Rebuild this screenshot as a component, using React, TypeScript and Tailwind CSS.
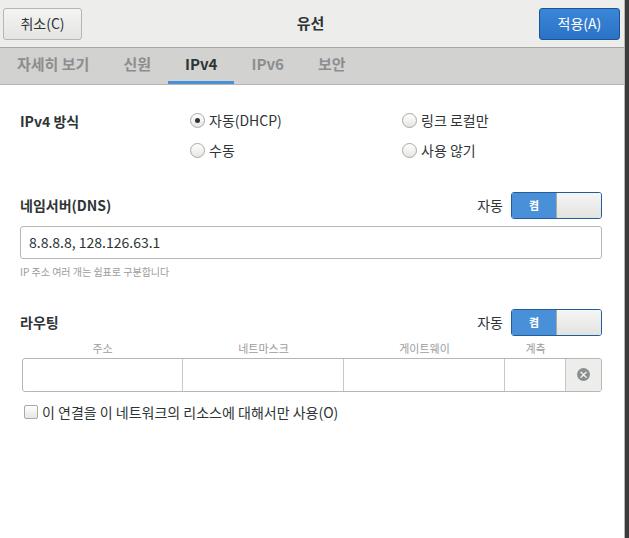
import { useState } from 'react';

const font = { fontFamily: '"Noto Sans CJK KR", "Noto Sans", sans-serif' };

function Radio({ on, label }: { on?: boolean; label: string }) {
  return (
    <label className="flex items-center gap-1 text-[14px] text-[#2e3436]">
      <span className="w-[15px] h-[15px] rounded-full border border-[#a8a8a5] bg-gradient-to-b from-white to-[#e6e6e4] flex items-center justify-center">
        {on && <span className="w-[5px] h-[5px] rounded-full bg-[#2e3436]" />}
      </span>
      {label}
    </label>
  );
}

function Toggle() {
  return (
    <div className="flex items-center gap-2">
      <span className="text-[14px] text-[#2e3436]">자동</span>
      <div className="flex w-[91px] h-[27px] rounded-[3px] border border-[#215d9c] overflow-hidden">
        <div className="w-[44px] bg-[#4a90d9] text-white text-[11px] font-bold flex items-center justify-center">켬</div>
        <div className="flex-1 bg-gradient-to-b from-[#f6f6f5] to-[#e2e2df] border-l border-[#a8a8a5]" />
      </div>
    </div>
  );
}

export default function App() {
  const [tab] = useState('IPv4');
  const tabs = ['자세히 보기', '신원', 'IPv4', 'IPv6', '보안'];
  return (
    <div style={font} className="w-[629px] h-[538px] bg-[#3c3c3c] overflow-hidden">
      <div className="w-[625px] h-[538px] bg-white border-r border-[#b6b6b3] flex flex-col">
        <div className="h-[48px] bg-[#ededeb] border-b border-[#a8a8a5] flex items-center justify-between px-[3px]">
          <button className="w-[79px] h-[32px] rounded-[3px] border border-[#b6b6b3] bg-gradient-to-b from-[#f4f4f3] to-[#e4e4e2] text-[14px] text-[#2e3436]">취소(C)</button>
          <span className="text-[15px] font-bold text-[#2e3436]">유선</span>
          <button className="w-[81px] h-[32px] rounded-[3px] border border-[#1b5495] bg-gradient-to-b from-[#3b86d8] to-[#2a72c5] text-[14px] text-white mr-[1px]">적용(A)</button>
        </div>
        <div className="h-[37px] bg-[#d2d2d0] border-b border-[#b6b6b3] flex items-stretch">
          {tabs.map((t) => (
            <div key={t} className={`px-[17px] flex items-center text-[15px] font-bold border-b-[3px] ${t === tab ? 'text-[#2e3436] border-[#4a90d9]' : 'text-[#8b8e8f] border-transparent'}`}>{t}</div>
          ))}
        </div>
        <div className="pl-[20px] pr-[22px] pt-[25px]">
          <div className="flex">
            <div className="w-[170px] text-[14px] font-bold text-[#2e3436] pt-[1px]">IPv4 방식</div>
            <div className="grid grid-cols-[212px_auto] gap-y-[9px]">
              <Radio on label="자동(DHCP)" />
              <Radio label="링크 로컬만" />
              <Radio label="수동" />
              <Radio label="사용 않기" />
            </div>
          </div>
          <div className="mt-[31px] flex items-center justify-between">
            <span className="text-[14px] font-bold text-[#2e3436]">네임서버(DNS)</span>
            <Toggle />
          </div>
          <div className="mt-[7px] h-[33px] rounded-[3px] border border-[#b6b6b3] flex items-center px-[8px] text-[14px] text-[#2e3436]">8.8.8.8, 128.126.63.1</div>
          <div className="mt-[5px] text-[10px] text-[#9a9c9d]">IP 주소 여러 개는 쉼표로 구분합니다</div>
          <div className="mt-[30px] flex items-center justify-between">
            <span className="text-[14px] font-bold text-[#2e3436]">라우팅</span>
            <Toggle />
          </div>
          <div className="ml-[2px] mt-[4px] grid grid-cols-[161px_161px_161px_61px_35px] text-[11px] text-[#9a9c9d] text-center">
            <span>주소</span><span>네트마스크</span><span>게이트웨이</span><span>계측</span><span />
          </div>
          <div className="ml-[2px] mt-[1px] h-[34px] rounded-[3px] border border-[#b6b6b3] grid grid-cols-[160px_161px_161px_61px_1fr] overflow-hidden">
            <div className="border-r border-[#c8c8c6]" />
            <div className="border-r border-[#c8c8c6]" />
            <div className="border-r border-[#c8c8c6]" />
            <div className="border-r border-[#c8c8c6]" />
            <div className="bg-[#ededeb] flex items-center justify-center">
              <span className="w-[13px] h-[13px] rounded-full bg-[#8b8e8f] text-white text-[10px] font-bold leading-[13px] text-center">×</span>
            </div>
          </div>
          <label className="mt-[10px] ml-[4px] flex items-center gap-[4px] text-[14px] text-[#2e3436]">
            <span className="w-[14px] h-[14px] rounded-[2px] border border-[#a8a8a5] bg-gradient-to-b from-white to-[#e6e6e4]" />
            이 연결을 이 네트워크의 리소스에 대해서만 사용(O)
          </label>
        </div>
      </div>
    </div>
  );
}
